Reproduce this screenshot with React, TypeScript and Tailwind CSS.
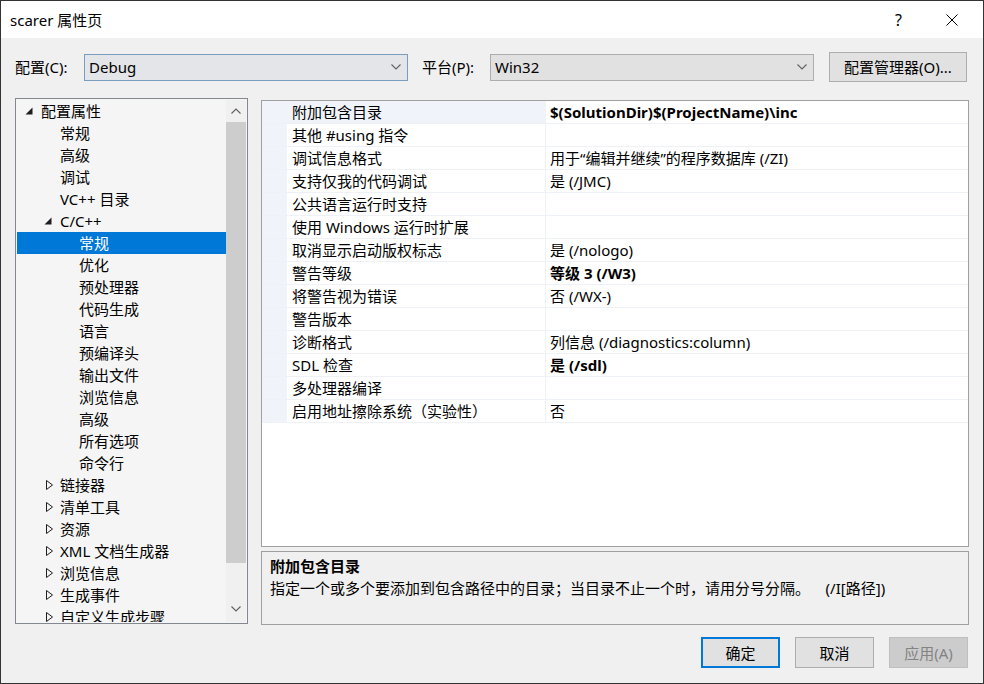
import React from "react";

const FONT = '"Noto Sans", "Noto Sans CJK SC", sans-serif';

function Chevron({ up = false, color = "#606060" }: { up?: boolean; color?: string }) {
  return (
    <svg width="10" height="6" viewBox="0 0 10 6">
      <polyline
        points={up ? "0.5,5.5 5,1 9.5,5.5" : "0.5,0.5 5,5 9.5,0.5"}
        fill="none"
        stroke={color}
        strokeWidth="1.1"
      />
    </svg>
  );
}

function Expanded() {
  return (
    <svg width="8" height="8" viewBox="0 0 8 8">
      <polygon points="7.5,0.5 7.5,7.5 0.5,7.5" fill="#1e1e1e" />
    </svg>
  );
}

function Collapsed() {
  return (
    <svg width="7" height="10" viewBox="0 0 7 10">
      <polygon points="0.5,0.5 6.5,5 0.5,9.5" fill="none" stroke="#1e1e1e" strokeWidth="1" />
    </svg>
  );
}

type TreeItem = { text: string; level: 0 | 1 | 2; tri?: "exp" | "col"; sel?: boolean };

const tree: TreeItem[] = [
  { text: "配置属性", level: 0, tri: "exp" },
  { text: "常规", level: 1 },
  { text: "高级", level: 1 },
  { text: "调试", level: 1 },
  { text: "VC++ 目录", level: 1 },
  { text: "C/C++", level: 1, tri: "exp" },
  { text: "常规", level: 2, sel: true },
  { text: "优化", level: 2 },
  { text: "预处理器", level: 2 },
  { text: "代码生成", level: 2 },
  { text: "语言", level: 2 },
  { text: "预编译头", level: 2 },
  { text: "输出文件", level: 2 },
  { text: "浏览信息", level: 2 },
  { text: "高级", level: 2 },
  { text: "所有选项", level: 2 },
  { text: "命令行", level: 2 },
  { text: "链接器", level: 1, tri: "col" },
  { text: "清单工具", level: 1, tri: "col" },
  { text: "资源", level: 1, tri: "col" },
  { text: "XML 文档生成器", level: 1, tri: "col" },
  { text: "浏览信息", level: 1, tri: "col" },
  { text: "生成事件", level: 1, tri: "col" },
  { text: "自定义生成步骤", level: 1, tri: "col" },
];

const props: { name: string; value: string; bold?: boolean }[] = [
  { name: "附加包含目录", value: "$(SolutionDir)$(ProjectName)\\inc", bold: true },
  { name: "其他 #using 指令", value: "" },
  { name: "调试信息格式", value: "用于“编辑并继续”的程序数据库 (/ZI)" },
  { name: "支持仅我的代码调试", value: "是 (/JMC)" },
  { name: "公共语言运行时支持", value: "" },
  { name: "使用 Windows 运行时扩展", value: "" },
  { name: "取消显示启动版权标志", value: "是 (/nologo)" },
  { name: "警告等级", value: "等级 3 (/W3)", bold: true },
  { name: "将警告视为错误", value: "否 (/WX-)" },
  { name: "警告版本", value: "" },
  { name: "诊断格式", value: "列信息 (/diagnostics:column)" },
  { name: "SDL 检查", value: "是 (/sdl)", bold: true },
  { name: "多处理器编译", value: "" },
  { name: "启用地址擦除系统（实验性）", value: "否" },
];

function TreeRow({ item }: { item: TreeItem }) {
  let pl = "pl-[43px]";
  if (item.level === 0) pl = "pl-[8px]";
  else if (item.level === 1 && item.tri) pl = "pl-[27px]";
  else if (item.level === 2) pl = "pl-[62px]";
  return (
    <div
      className={`flex h-[22px] shrink-0 items-center whitespace-nowrap ${pl} ${
        item.sel ? "bg-[#0078d7] text-white" : "text-black"
      }`}
    >
      {item.tri && (
        <span className="flex w-[16px] shrink-0 items-center">
          {item.tri === "exp" ? <Expanded /> : <span className="ml-[2px] flex"><Collapsed /></span>}
        </span>
      )}
      <span className="leading-[22px]">{item.text}</span>
    </div>
  );
}

export default function App() {
  return (
    <div
      className="flex h-[684px] w-[984px] flex-col border border-[#333333] bg-[#f0f0f0] text-[15px] text-black"
      style={{ fontFamily: FONT }}
    >
      {/* Title bar */}
      <div className="flex h-[37px] shrink-0 items-center bg-white pl-[9px]">
        <span className="leading-[20px]">scarer 属性页</span>
        <div className="ml-auto flex items-center">
          <span className="mr-[44px] text-[16px] leading-[20px]">?</span>
          <svg width="12" height="12" viewBox="0 0 12 12" className="mr-[25px]">
            <path d="M0.5,0.5 L11.5,11.5 M11.5,0.5 L0.5,11.5" stroke="#000" strokeWidth="1" />
          </svg>
        </div>
      </div>

      <div className="flex flex-1 flex-col px-[14px]">
        {/* Top row */}
        <div className="mt-[14px] flex h-[30px] shrink-0 items-center">
          <span className="w-[69px] leading-[20px]">配置(C):</span>
          <div className="flex h-[27px] w-[324px] items-center border border-[#7a9cbf] bg-[#e3e5e8] pl-[4px] pr-[6px]">
            <span className="leading-[20px]">Debug</span>
            <span className="ml-auto flex"><Chevron /></span>
          </div>
          <span className="ml-[14px] w-[68px] leading-[20px]">平台(P):</span>
          <div className="flex h-[27px] w-[324px] items-center border border-[#adadad] bg-[#e1e1e1] pl-[4px] pr-[6px]">
            <span className="leading-[20px]">Win32</span>
            <span className="ml-auto flex"><Chevron /></span>
          </div>
          <div className="ml-[15px] flex h-[30px] w-[138px] items-center justify-center border border-[#adadad] bg-[#e1e1e1]">
            <span className="leading-[20px]">配置管理器(O)...</span>
          </div>
        </div>

        {/* Main */}
        <div className="mt-[16px] flex h-[527px] shrink-0 gap-[13px]">
          {/* Tree */}
          <div className="flex h-[526px] w-[233px] shrink-0 border border-[#828790] bg-[#f5f5f5] p-[1px] pr-[1px]">
            <div className="flex w-[209px] flex-col overflow-hidden">
              {tree.map((t, i) => (
                <TreeRow key={i} item={t} />
              ))}
            </div>
            <div className="flex w-[20px] flex-col bg-[#f0f0f0]">
              <div className="flex h-[22px] shrink-0 items-center justify-center">
                <Chevron up />
              </div>
              <div className="h-[441px] shrink-0 bg-[#cdcdcd]" />
              <div className="flex-1" />
              <div className="flex h-[22px] shrink-0 items-center justify-center pb-[4px]">
                <Chevron />
              </div>
            </div>
          </div>

          {/* Right column */}
          <div className="mt-[2px] flex w-[708px] flex-col">
            <div className="h-[447px] shrink-0 border border-[#a0a0a0] bg-white">
              {props.map((p, i) => (
                <div key={i} className="flex h-[23px] border-b border-[#eef2f7]">
                  <div className="w-[25px] shrink-0 bg-[#f0f4fa]" />
                  <div
                    className={`w-[259px] shrink-0 whitespace-nowrap border-r border-[#eef2f7] pl-[5px] leading-[22px] ${
                      i === 0 ? "bg-[#f0f4fa]" : ""
                    }`}
                  >
                    {p.name}
                  </div>
                  <div className={`flex-1 whitespace-nowrap pl-[4px] leading-[22px] ${p.bold ? "font-bold" : ""}`}>
                    {p.value}
                  </div>
                </div>
              ))}
            </div>
            <div className="mt-[4px] h-[74px] shrink-0 border border-[#a0a0a0] bg-[#f0f0f0] pl-[8px] pt-[3px]">
              <div className="font-bold leading-[22px]">附加包含目录</div>
              <div className="whitespace-pre leading-[22px]">
                指定一个或多个要添加到包含路径中的目录；当目录不止一个时，请用分号分隔。    (/I[路径])
              </div>
            </div>
          </div>
        </div>

        {/* Buttons */}
        <div className="mt-[12px] flex h-[31px] shrink-0 justify-end gap-[15px] pr-[1px]">
          <div className="flex w-[79px] items-center justify-center border-2 border-[#0078d7] bg-[#e1e1e1]">
            <span className="leading-[20px]">确定</span>
          </div>
          <div className="flex w-[79px] items-center justify-center border border-[#adadad] bg-[#e1e1e1]">
            <span className="leading-[20px]">取消</span>
          </div>
          <div className="flex w-[79px] items-center justify-center border border-[#bfbfbf] bg-[#cccccc] text-[#838383]">
            <span className="leading-[20px]">应用(A)</span>
          </div>
        </div>
      </div>
    </div>
  );
}
